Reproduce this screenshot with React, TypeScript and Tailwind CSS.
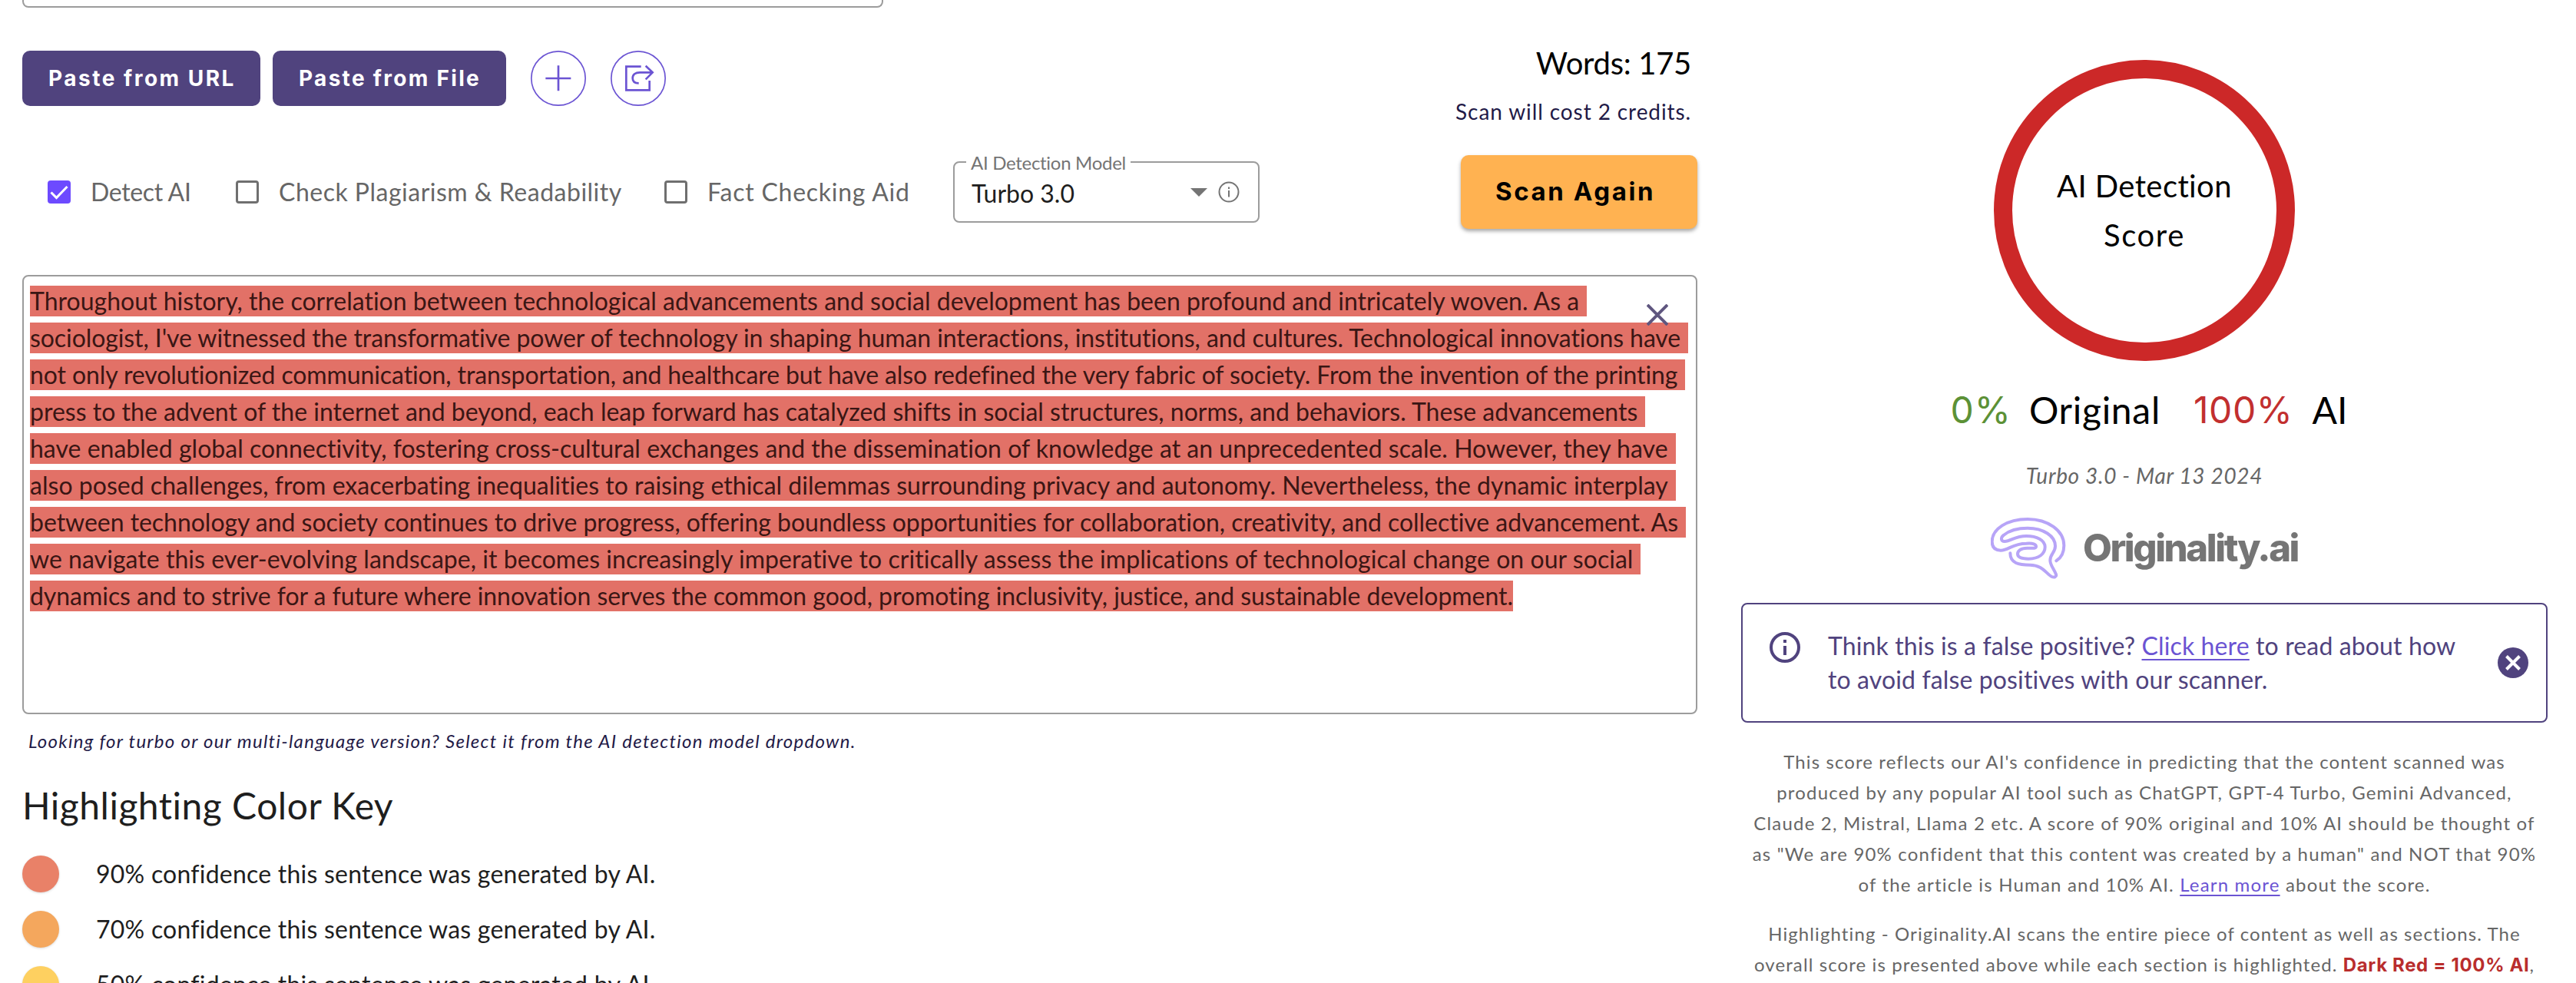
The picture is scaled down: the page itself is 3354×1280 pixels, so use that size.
import type { ReactNode } from "react";

interface Line {
  text: string;
  tracking: string;
}

const scannedLines: Line[] = [
  { text: "Throughout history, the correlation between technological advancements and social development has been profound and intricately woven. As a", tracking: "tracking-[0.005px]" },
  { text: "sociologist, I've witnessed the transformative power of technology in shaping human interactions, institutions, and cultures. Technological innovations have", tracking: "tracking-[-0.08px]" },
  { text: "not only revolutionized communication, transportation, and healthcare but have also redefined the very fabric of society. From the invention of the printing", tracking: "tracking-[-0.105px]" },
  { text: "press to the advent of the internet and beyond, each leap forward has catalyzed shifts in social structures, norms, and behaviors. These advancements", tracking: "tracking-[0.01px]" },
  { text: "have enabled global connectivity, fostering cross-cultural exchanges and the dissemination of knowledge at an unprecedented scale. However, they have", tracking: "tracking-[0.015px]" },
  { text: "also posed challenges, from exacerbating inequalities to raising ethical dilemmas surrounding privacy and autonomy. Nevertheless, the dynamic interplay", tracking: "tracking-[0.025px]" },
  { text: "between technology and society continues to drive progress, offering boundless opportunities for collaboration, creativity, and collective advancement. As", tracking: "tracking-[-0.035px]" },
  { text: "we navigate this ever-evolving landscape, it becomes increasingly imperative to critically assess the implications of technological change on our social", tracking: "tracking-[0.04px]" },
  { text: "dynamics and to strive for a future where innovation serves the common good, promoting inclusivity, justice, and sustainable development.", tracking: "tracking-[-0.05px]" },
];

const colorKey = [
  { percent: 90, color: "bg-[#e98168]" },
  { percent: 70, color: "bg-[#f4a75d]" },
  { percent: 50, color: "bg-[#fed060]" },
];

function Checkbox({ checked = false }: { checked?: boolean }) {
  if (!checked) {
    return <span className="h-[30px] w-[30px] shrink-0 rounded-[4px] border-[3px] border-[#6f6f6f]" />;
  }
  return (
    <span className="flex h-[30px] w-[30px] shrink-0 items-center justify-center rounded-[4px] bg-[#6d4aff]">
      <svg viewBox="0 0 30 30" className="h-[30px] w-[30px]" fill="none" stroke="white" strokeWidth="3">
        <path d="M4.5 15.5 11.5 22.5 25.5 8" />
      </svg>
    </span>
  );
}

function Option({ label, checked, className }: { label: string; checked?: boolean; className: string }) {
  return (
    <label className="flex items-center gap-[26px]">
      <Checkbox checked={checked} />
      <span className={`text-[32px] leading-10 whitespace-nowrap text-[#666] ${className}`}>{label}</span>
    </label>
  );
}

function RoundButton({ label, children }: { label: string; children: ReactNode }) {
  return (
    <button aria-label={label} className="h-[72px] w-[72px] rounded-full">
      <svg viewBox="0 0 216 216" className="h-full w-full" fill="none" stroke="#6b54d3" strokeWidth="8">
        <circle cx="108" cy="108" r="105.5" strokeWidth="5" />
        {children}
      </svg>
    </button>
  );
}

function BrainLogo() {
  return (
    <svg viewBox="96 71 294 240" className="h-[80px] w-[98px]" fill="none" stroke="#b7a4f7" strokeWidth="12" strokeLinecap="round">
      <path d="M352 240C372 228 382 206 382 180C382 122 320 77 240 77C160 77 101 115 101 165C101 188 114 199 135 199C166 199 180 172 235 172C262 170 274 175 273 185C272 193 256 190 238 190C212 190 201 202 201 213C201 227 220 232 243 232C285 232 308 212 308 186C308 158 275 143 235 143C190 143 176 163 150 164C136 164 133 150 147 139C166 123 200 112 240 112C302 112 348 143 348 182C348 208 328 212 328 238C328 257 345 275 351 293C354 303 344 306 335 302C314 292 298 256 250 256C206 256 172 250 172 210" />
    </svg>
  );
}

export default function App() {
  return (
    <div className="flex h-[1280px] w-[3354px] overflow-hidden bg-white pl-[29px] font-['Lato',sans-serif]">
      <main className="flex w-[2181px] shrink-0 flex-col">
        <div className="h-[10px] w-[1121px] shrink-0 rounded-b-[8px] border-2 border-t-0 border-[#9c9c9c]" />

        <div className="mt-[48px] flex h-[107px] shrink-0 justify-between">
          <div className="mt-[8px] flex h-[72px] font-['Inter',sans-serif] text-[28px] font-bold text-white">
            <button className="w-[310px] rounded-[10px] bg-[#50437e] pl-[34px] text-left tracking-[2.5px]">
              Paste from URL
            </button>
            <button className="ml-4 w-[304px] rounded-[10px] bg-[#50437e] pl-[34px] text-left tracking-[2.3px]">
              Paste from File
            </button>
            <div className="ml-8 flex gap-8">
              <RoundButton label="Add">
                <path d="M58 108H157M108 58V157" />
              </RoundButton>
              <RoundButton label="Share">
                <path d="M119 62H61V154H152V117" />
                <path d="M137 59 164 85 137 112M163 85H114C97 85 86 94 86 107C86 120 95 127 110 127" />
              </RoundButton>
            </div>
          </div>
          <div className="pr-[8px] text-right">
            <p className="text-[40px] leading-[48px] tracking-[-0.3px] text-black">Words: 175</p>
            <p className="mt-[19px] text-[28px] leading-10 tracking-[0.9px] text-[#1f1a47]">Scan will cost 2 credits.</p>
          </div>
        </div>

        <div className="mt-[37px] flex h-[96px] shrink-0 items-center pl-[33px]">
          <div className="flex w-[245px]">
            <Option label="Detect AI" checked className="tracking-[-0.35px]" />
          </div>
          <div className="flex w-[558px]">
            <Option label="Check Plagiarism & Readability" className="tracking-[0.5px]" />
          </div>
          <div className="flex w-[376px]">
            <Option label="Fact Checking Aid" className="tracking-[0.75px]" />
          </div>
          <div className="relative flex h-[80px] w-[399px] items-center rounded-[8px] border-2 border-[#9c9c9c] pr-[24px] pl-[22px]">
            <span className="absolute -top-[16px] left-[15px] bg-white px-[6px] text-[24px] leading-8 tracking-[-0.3px] whitespace-nowrap text-[#747474]">
              AI Detection Model
            </span>
            <span className="mt-1 text-[32px] leading-10 text-[#1e1e1e]">Turbo 3.0</span>
            <svg viewBox="0 0 22 11" className="ml-auto h-[11px] w-[22px]" fill="#747474">
              <path d="M0 0H22L11 11Z" />
            </svg>
            <svg viewBox="0 0 28 28" className="ml-[14px] h-[28px] w-[28px]" fill="none" stroke="#747474" strokeWidth="2">
              <circle cx="14" cy="14" r="12.5" />
              <path d="M14 12V20.5M14 7.5V10" />
            </svg>
          </div>
          <button className="ml-auto h-[96px] w-[308px] rounded-[10px] bg-[#ffb251] pl-[45px] text-left font-['Inter',sans-serif] text-[33px] font-bold tracking-[2.6px] text-black shadow-[0_3px_5px_rgba(0,0,0,0.35)]">
            Scan Again
          </button>
        </div>

        <div className="relative mt-[60px] flex h-[572px] shrink-0 flex-col items-start gap-2 rounded-[8px] border-2 border-[#9c9c9c] px-2 pt-3">
          {scannedLines.map((line, i) => (
            <p
              key={i}
              className={`h-10 bg-[#e27167] text-[32px] leading-10 whitespace-nowrap text-[#3a1614] ${line.tracking} ${
                i < scannedLines.length - 1 ? "pr-[10px]" : ""
              }`}
            >
              {line.text}
            </p>
          ))}
          <svg viewBox="0 0 28 28" className="absolute top-[36px] right-[36px] h-[28px] w-[28px]" stroke="#5f567f" strokeWidth="4">
            <path d="M1 1 27 27M27 1 1 27" />
          </svg>
        </div>

        <p className="mt-[19px] pl-2 text-[24px] leading-8 tracking-[1.28px] whitespace-nowrap text-[#1f1a47] italic">
          Looking for turbo or our multi-language version? Select it from the AI detection model dropdown.
        </p>

        <h2 className="mt-[36px] text-[48px] leading-[64px] tracking-[0.5px] text-[#1e1e1e]">Highlighting Color Key</h2>
        <ul className="mt-[33px] flex flex-col gap-6">
          {colorKey.map(({ percent, color }) => (
            <li key={percent} className="flex items-center gap-12">
              <span className={`h-12 w-12 rounded-full shadow-[0_1px_3px_rgba(0,0,0,0.15)] ${color}`} />
              <span className="text-[32px] leading-10 tracking-[0.23px] text-[#1e1e1e]">
                {percent}% confidence this sentence was generated by AI.
              </span>
            </li>
          ))}
        </ul>
      </main>

      <aside className="ml-[57px] flex w-[1050px] shrink-0 flex-col items-center">
        <div className="mt-[78px] flex h-[392px] w-[392px] shrink-0 items-center justify-center rounded-full border-[24px] border-[#cc2828]">
          <p className="text-center text-[40px] leading-[64px] text-black">
            <span className="tracking-[0.4px]">AI Detection</span>
            <br />
            <span className="tracking-[1.6px]">Score</span>
          </p>
        </div>

        <div className="mt-[32px] flex pl-3 text-[48px] leading-[64px] text-black">
          <span className="font-['Inter',sans-serif] tracking-[1px] text-[#5c9136]">0%</span>
          <span className="ml-[23px] tracking-[0.7px]">Original</span>
          <span className="ml-[43px] font-['Inter',sans-serif] tracking-[0.6px] text-[#c22f2f]">100%</span>
          <span className="ml-[25px]">AI</span>
        </div>
        <p className="mt-[33px] text-[28px] leading-10 tracking-[0.68px] text-[#666] italic">Turbo 3.0 - Mar 13 2024</p>

        <div className="mt-[35px] flex h-[80px] items-start gap-[22px]">
          <BrainLogo />
          <span className="font-['Inter',sans-serif] text-[49px] leading-[80px] font-extrabold tracking-[-2.4px] text-[#757575]">
            Originality.ai
          </span>
        </div>

        <div className="mt-[31px] flex h-[156px] w-full shrink-0 rounded-[8px] border-2 border-[#50437e] pr-[23px] pl-[35px] text-[#50437e]">
          <svg viewBox="0 0 40 40" className="mt-[36px] h-[40px] w-[40px] shrink-0" fill="none" stroke="currentColor" strokeWidth="4">
            <circle cx="20" cy="20" r="18" />
            <path d="M20 18V30M20 10V14" />
          </svg>
          <p className="mt-[32px] ml-[36px] text-[32px] leading-[44px] tracking-[0.13px] whitespace-nowrap">
            Think this is a false positive?{" "}
            <a className="text-[#6b54d3] underline decoration-2 underline-offset-[5px]">Click here</a> to read about how
            <br />
            to avoid false positives with our scanner.
          </p>
          <svg viewBox="0 0 40 40" className="my-auto ml-auto h-[40px] w-[40px] shrink-0">
            <circle cx="20" cy="20" r="20" fill="#50437e" />
            <path d="M11.5 11.5 28.5 28.5M28.5 11.5 11.5 28.5" stroke="white" strokeWidth="4" />
          </svg>
        </div>

        <p className="mt-[31px] text-center text-[24px] leading-10 tracking-[1.18px] whitespace-nowrap text-[#666]">
          <span className="tracking-[1.1px]">This score reflects our AI's confidence in predicting that the content scanned was</span>
          <br />
          produced by any popular AI tool such as ChatGPT, GPT-4 Turbo, Gemini Advanced,
          <br />
          Claude 2, Mistral, Llama 2 etc. A score of 90% original and 10% AI should be thought of
          <br />
          as "We are 90% confident that this content was created by a human" and NOT that 90%
          <br />
          of the article is Human and 10% AI.{" "}
          <a className="text-[#6b54d3] underline decoration-2 underline-offset-4">Learn more</a> about the score.
        </p>
        <p className="mt-6 text-center text-[24px] leading-10 tracking-[1.1px] whitespace-nowrap text-[#666]">
          Highlighting - Originality.AI scans the entire piece of content as well as sections. The
          <br />
          overall score is presented above while each section is highlighted.{" "}
          <span className="font-['Inter',sans-serif] font-bold tracking-[0.65px] text-[#b92d2d]">Dark Red = 100% AI</span>,
        </p>
      </aside>
    </div>
  );
}
